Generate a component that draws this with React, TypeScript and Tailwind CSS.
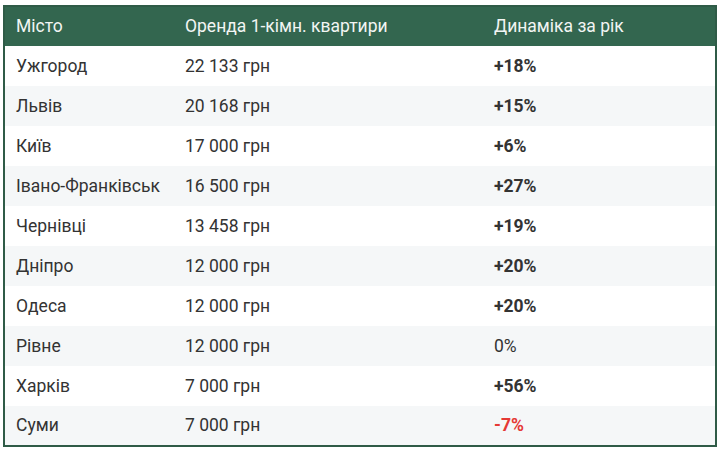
import React from 'react';

type Row = { city: string; rent: string; change: string; tone: 'up' | 'zero' | 'down' };

const rows: Row[] = [
  { city: 'Ужгород', rent: '22 133 грн', change: '+18%', tone: 'up' },
  { city: 'Львів', rent: '20 168 грн', change: '+15%', tone: 'up' },
  { city: 'Київ', rent: '17 000 грн', change: '+6%', tone: 'up' },
  { city: 'Івано-Франківськ', rent: '16 500 грн', change: '+27%', tone: 'up' },
  { city: 'Чернівці', rent: '13 458 грн', change: '+19%', tone: 'up' },
  { city: 'Дніпро', rent: '12 000 грн', change: '+20%', tone: 'up' },
  { city: 'Одеса', rent: '12 000 грн', change: '+20%', tone: 'up' },
  { city: 'Рівне', rent: '12 000 грн', change: '0%', tone: 'zero' },
  { city: 'Харків', rent: '7 000 грн', change: '+56%', tone: 'up' },
  { city: 'Суми', rent: '7 000 грн', change: '-7%', tone: 'down' },
];

const App = () => {
  return (
    <div className="bg-white w-[725px] h-[452px] pt-[5px] pl-[3px]" style={{ fontFamily: 'Roboto, "Noto Sans", sans-serif' }}>
      <table className="w-[714px] border-2 border-[#2f5b47] border-collapse text-[17.5px] text-[#333]">
        <thead>
          <tr className="bg-[#33664f] text-[#f2f5f3] h-[40px]">
            <th className="w-[170px] text-left font-normal pl-[11px]">Місто</th>
            <th className="w-[309px] text-left font-normal pl-[11px]">Оренда 1-кімн. квартири</th>
            <th className="text-left font-normal pl-[11px]">Динаміка за рік</th>
          </tr>
        </thead>
        <tbody>
          {rows.map((r, i) => (
            <tr key={r.city} className={`h-[40px] ${i % 2 === 1 ? 'bg-[#f5f7f8]' : 'bg-white'}`}>
              <td className="pl-[11px]">{r.city}</td>
              <td className="pl-[11px]">{r.rent}</td>
              <td
                className={`pl-[11px] ${
                  r.tone === 'up' ? 'font-bold' : r.tone === 'down' ? 'font-bold text-[#e53935]' : ''
                }`}
              >
                {r.change}
              </td>
            </tr>
          ))}
        </tbody>
      </table>
    </div>
  );
};

export default App;
